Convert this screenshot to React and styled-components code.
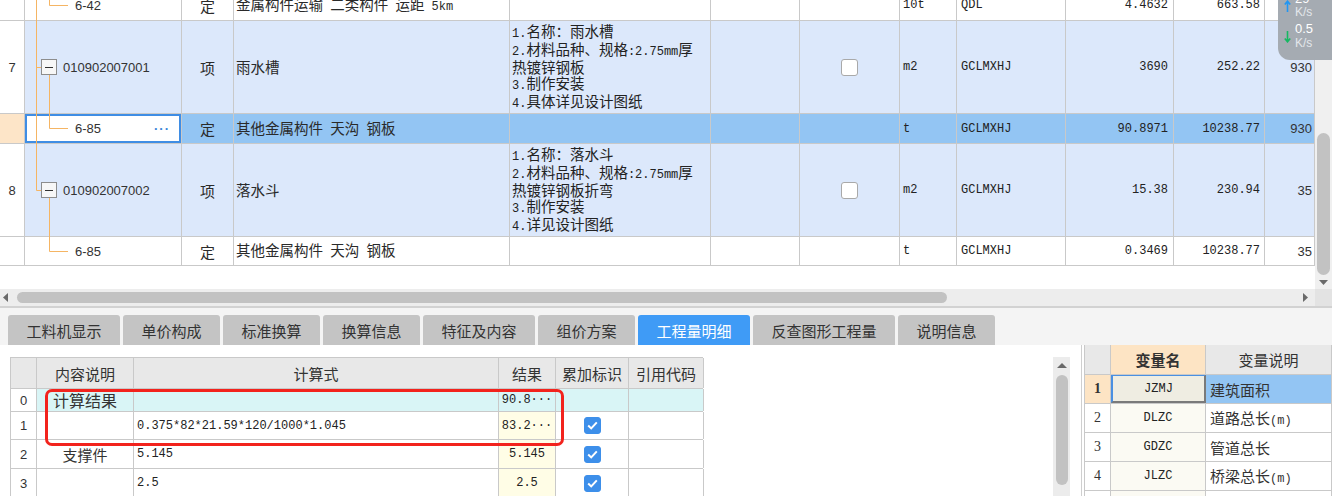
import React from 'react';
import styled, { createGlobalStyle } from 'styled-components';

const GlobalStyle = createGlobalStyle`
  html, body { margin: 0; padding: 0; background: #fff; overflow: hidden; }
  body { font-family: "Noto Sans CJK SC", "Liberation Sans", sans-serif; color: #2a2a2a; }
  * { box-sizing: border-box; }
`;

const HAN = /([\u2E80-\u9FFF\u3000-\u303F\uFF00-\uFFEF]+)/;
const LINE = '#c9c9c9';
const TOP_COLS = '25px 157px 52px 276px 201px 89px 100px 57px 109px 108px 91px 50px';

const Han = styled.span`
  font-family: "Noto Sans CJK SC", sans-serif;
  font-size: ${p => p.size || 14.5}px;
`;
const Latin = styled.span`
  font-family: "Liberation Mono", monospace;
  font-size: 12px;
  white-space: pre;
`;
const MixLine = styled.span`
  display: inline-flex;
  align-items: baseline;
  line-height: 1;
  white-space: pre;
`;

// SimSun-like mix: half width latin, full width han
const Mixed = ({ text, size }) => (
  <MixLine>
    {text.split(HAN).filter(Boolean).map((p, i) =>
      HAN.test(p) ? <Han key={i} size={size}>{p}</Han> : <Latin key={i}>{p}</Latin>
    )}
  </MixLine>
);

const Page = styled.div`
  position: relative;
  width: 1332px;
  height: 496px;
  overflow: hidden;
  display: flex;
  flex-direction: column;
`;

/* ---------- top grid ---------- */
const TopArea = styled.div`
  position: relative;
  height: 289px;
  display: flex;
`;
const GridWrap = styled.div`
  width: 1315px;
  overflow: hidden;
`;
const Grid = styled.div`
  margin-top: -10px;
`;
const rowBg = { item: '#dce8fb', sel: '#93c5f3', plain: '#fff' };
const Row = styled.div`
  display: grid;
  grid-template-columns: ${TOP_COLS};
  height: ${p => p.h}px;
  border-bottom: 1px solid ${LINE};
  background: ${p => rowBg[p.tone]};
`;
const Cell = styled.div`
  position: relative;
  display: flex;
  align-items: center;
  justify-content: ${p => (p.align === 'right' ? 'flex-end' : p.align === 'center' ? 'center' : 'flex-start')};
  padding: 0 ${p => p.pr ?? 3}px 0 ${p => p.pl ?? 3}px;
  border-right: 1px solid ${LINE};
  overflow: hidden;
  white-space: nowrap;
  background: ${p => p.bg || 'transparent'};
  box-shadow: ${p => (p.focus ? 'inset 0 0 0 2px #3f8de4' : 'none')};
`;
const CodeText = styled.span`
  font-family: "Liberation Sans", sans-serif;
  font-size: 13px;
  color: #333;
`;
const NumText = styled.span`
  font-family: "Liberation Mono", monospace;
  font-size: 12px;
  color: #222;
`;
const SansNum = styled.span`
  font-family: "Liberation Sans", sans-serif;
  font-size: 13px;
  color: #333;
`;
const ExpandBox = styled.span`
  width: 16px;
  height: 16px;
  margin-right: 6px;
  border: 1px solid #8d8d8d;
  background: #f7f7f7;
  display: flex;
  align-items: center;
  justify-content: center;
  &::after {
    content: '';
    width: 8px;
    height: 1px;
    background: #333;
  }
`;
const Dots = styled.span`
  margin-left: auto;
  margin-right: 8px;
  color: #3b86d8;
  font-family: "Liberation Sans", sans-serif;
  font-weight: bold;
  font-size: 13px;
  letter-spacing: 1px;
`;
const Feat = styled.div`
  display: flex;
  flex-direction: column;
  color: #222;
`;
const FeatLine = styled.div`
  height: 17.4px;
  display: flex;
  align-items: center;
`;
const Box = styled.span`
  width: 17px;
  height: 17px;
  border-radius: 3px;
  border: 1px solid ${p => (p.on ? '#3d8fea' : '#a9a9a9')};
  background: ${p => (p.on ? '#3d8fea' : '#fff')};
  display: flex;
  align-items: center;
  justify-content: center;
`;
const TreeLines = styled.svg`
  position: absolute;
  left: 0;
  top: 0;
  pointer-events: none;
`;

const VScroll = styled.div`
  width: 17px;
  background: #f0f0f0;
  display: flex;
  flex-direction: column;
  align-items: center;
`;
const Thumb = styled.div`
  width: ${p => p.w || 13}px;
  height: ${p => p.h}px;
  margin-top: ${p => p.mt}px;
  border-radius: 7px;
  background: #c2c2c2;
`;
const Arrow = styled.svg`
  flex: none;
  margin-top: ${p => p.mt || 0}px;
`;

/* ---------- net speed overlay ---------- */
const Speed = styled.div`
  position: absolute;
  left: 1278px;
  top: 0;
  width: 70px;
  height: 60px;
  background: #a5abb2;
  border-bottom-left-radius: 12px;
  padding-left: 6px;
  display: flex;
  flex-direction: column;
`;
const SpeedGroup = styled.div`
  display: flex;
  align-items: center;
  gap: 4px;
  margin-top: ${p => p.mt}px;
`;
const SpeedLines = styled.div`
  display: flex;
  flex-direction: column;
  font-family: "Liberation Sans", sans-serif;
`;
const SpeedVal = styled.span`
  color: #fff;
  font-size: 13px;
  line-height: 14px;
`;
const SpeedUnit = styled.span`
  color: #e3e7eb;
  font-size: 12px;
  line-height: ${p => p.lh || 13}px;
`;

/* ---------- scrollbar + tabs ---------- */
const HScroll = styled.div`
  height: 19px;
  background: #ededed;
  border-bottom: 2px solid #d2d2d2;
  display: flex;
  align-items: center;
`;
const HThumb = styled.div`
  width: 930px;
  height: 11px;
  margin-left: 9px;
  border-radius: 6px;
  background: #c2c2c2;
`;
const Corner = styled.div`
  margin-left: auto;
  width: 17px;
  height: 100%;
  background: #e3e3e3;
`;
const TabBar = styled.div`
  height: 37px;
  background: #f4f4f4;
  padding: 7px 0 0 8px;
  display: flex;
  gap: 3px;
`;
const Tab = styled.div`
  width: ${p => p.w}px;
  height: 30px;
  display: flex;
  align-items: center;
  justify-content: center;
  border-radius: 3px 3px 0 0;
  background: ${p => (p.active ? '#3f9bf6' : '#c4c4c4')};
  color: ${p => (p.active ? '#fff' : '#333')};
  font-size: 15px;
`;

/* ---------- bottom panes ---------- */
const Bottom = styled.div`
  flex: 1;
  display: flex;
  min-height: 0;
`;
const LeftPane = styled.div`
  position: relative;
  width: 1082px;
  border-right: 1px solid #cfcfcf;
  padding: 12px 11px 0 10px;
  display: flex;
  align-items: flex-start;
`;
const CalcTable = styled.div`
  width: 693px;
  border-left: 1px solid ${LINE};
  border-top: 1px solid ${LINE};
`;
const CalcRow = styled.div`
  display: grid;
  grid-template-columns: 26px 97px 365px 57px 73px 75px;
  height: ${p => p.h}px;
  border-bottom: 1px solid ${LINE};
`;
const CalcCell = styled.div`
  display: flex;
  align-items: center;
  justify-content: ${p => (p.left ? 'flex-start' : 'center')};
  padding-left: ${p => (p.left ? 3 : 0)}px;
  border-right: 1px solid ${LINE};
  background: ${p => p.bg || '#fff'};
  font-size: ${p => p.fs || 15}px;
  color: #333;
  white-space: nowrap;
  overflow: hidden;
`;
const RedMark = styled.div`
  position: absolute;
  left: 45px;
  top: 44px;
  width: 519px;
  height: 57px;
  border: 3px solid #f2231d;
  border-radius: 7px;
  pointer-events: none;
`;
const SideScroll = styled(VScroll)`
  margin-left: auto;
  height: 139px;
  background: #ececec;
`;
const RightPane = styled.div`
  flex: 1;
  padding-left: 2px;
`;
const VarTable = styled.div`
  border-left: 1px solid ${LINE};
`;
const VarRow = styled.div`
  display: grid;
  grid-template-columns: 26px 95px 1fr;
  height: ${p => p.h}px;
  border-bottom: 1px solid ${LINE};
`;
const VarCell = styled.div`
  display: flex;
  align-items: center;
  justify-content: ${p => (p.left ? 'flex-start' : 'center')};
  padding-left: ${p => (p.left ? 4 : 0)}px;
  border-right: 1px solid ${LINE};
  background: ${p => p.bg || '#fff'};
  font-size: 15px;
  font-weight: ${p => (p.bold ? 700 : 400)};
  color: #333;
  white-space: nowrap;
  overflow: hidden;
`;
const VarName = styled(VarCell)`
  border-top: 1px solid #4a90e2;
  border-left: 2px solid #4a90e2;
  border-right: 2px solid #7a7a7a;
  border-bottom: 2px solid #7a7a7a;
`;
const SerifNum = styled.span`
  font-family: "Liberation Serif", serif;
  font-size: 14px;
  font-weight: ${p => (p.bold ? 700 : 400)};
`;

const feat7 = ['1.名称：雨水槽', '2.材料品种、规格:2.75mm厚', '热镀锌钢板', '3.制作安装', '4.具体详见设计图纸'];
const feat8 = ['1.名称：落水斗', '2.材料品种、规格:2.75mm厚', '热镀锌钢板折弯', '3.制作安装', '4.详见设计图纸'];

const rows = [
  { h: 31, tone: 'plain', code: '6-42', child: true, kind: '定', name: '金属构件运输 二类构件 运距 5km', unit: '10t', ref: 'QDL', qty: '4.4632', price: '663.58', total: '' },
  { h: 93, tone: 'item', num: '7', code: '010902007001', kind: '项', name: '雨水槽', feat: feat7, unit: 'm2', ref: 'GCLMXHJ', qty: '3690', price: '252.22', total: '930' },
  { h: 30, tone: 'sel', code: '6-85', child: true, focus: true, kind: '定', name: '其他金属构件 天沟 钢板', unit: 't', ref: 'GCLMXHJ', qty: '90.8971', price: '10238.77', total: '930' },
  { h: 93, tone: 'item', num: '8', code: '010902007002', kind: '项', name: '落水斗', feat: feat8, unit: 'm2', ref: 'GCLMXHJ', qty: '15.38', price: '230.94', total: '35' },
  { h: 29, tone: 'plain', code: '6-85', child: true, kind: '定', name: '其他金属构件 天沟 钢板', unit: 't', ref: 'GCLMXHJ', qty: '0.3469', price: '10238.77', total: '35' },
];

const tabs = [
  ['工料机显示', 112], ['单价构成', 97], ['标准换算', 97], ['换算信息', 97], ['特征及内容', 112],
  ['组价方案', 97], ['工程量明细', 112, true], ['反查图形工程量', 142], ['说明信息', 97],
];

const calcRows = [
  { h: 23, n: '0', desc: '计算结果', formula: '', result: '90.8···', check: false, cyan: true },
  { h: 28, n: '1', desc: '', formula: '0.375*82*21.59*120/1000*1.045', result: '83.2···', check: true },
  { h: 29, n: '2', desc: '支撑件', formula: '5.145', result: '5.145', check: true },
  { h: 29, n: '3', desc: '', formula: '2.5', result: '2.5', check: true },
];

const vars = [
  ['2', 'DLZC', '道路总长(m)'],
  ['3', 'GDZC', '管道总长'],
  ['4', 'JLZC', '桥梁总长(m)'],
  ['5', '', ''],
];

const Check = ({ on }) => (
  <Box on={on}>
    {on && (
      <svg width="11" height="9" viewBox="0 0 11 9">
        <path d="M1.2 4.6 L4.2 7.4 L9.8 1.4" fill="none" stroke="#fff" strokeWidth="2" />
      </svg>
    )}
  </Box>
);

const TopRow = ({ r }) => (
  <Row h={r.h} tone={r.tone}>
    <Cell align="center" bg={r.tone === 'sel' ? '#fde5c8' : '#fff'}>
      <SansNum>{r.num}</SansNum>
    </Cell>
    <Cell pl={r.child ? 50 : 16} bg={r.focus ? '#fff' : undefined} focus={r.focus}>
      {!r.child && <ExpandBox />}
      <CodeText>{r.code}</CodeText>
      {r.focus && <Dots>···</Dots>}
    </Cell>
    <Cell align="center"><Han size={15}>{r.kind}</Han></Cell>
    <Cell pl={2}><Mixed text={r.name} /></Cell>
    <Cell pl={2}>
      {r.feat && (
        <Feat>
          {r.feat.map(t => <FeatLine key={t}><Mixed text={t} /></FeatLine>)}
        </Feat>
      )}
    </Cell>
    <Cell />
    <Cell align="center">{r.feat && <Check />}</Cell>
    <Cell pl={3}><NumText>{r.unit}</NumText></Cell>
    <Cell pl={4}><NumText>{r.ref}</NumText></Cell>
    <Cell align="right" pr={5}><NumText>{r.qty}</NumText></Cell>
    <Cell align="right" pr={4}><NumText>{r.price}</NumText></Cell>
    <Cell align="right" pr={2}><SansNum>{r.total}</SansNum></Cell>
  </Row>
);

export default function App() {
  return (
    <Page>
      <GlobalStyle />
      <TopArea>
        <GridWrap>
          <Grid>
            {rows.map((r, i) => <TopRow key={i} r={r} />)}
          </Grid>
        </GridWrap>
        <VScroll>
          <Thumb mt={133} h={142} />
          <Arrow mt={5} width="9" height="5" viewBox="0 0 9 5">
            <path d="M0 0 L9 0 L4.5 5 Z" fill="#6a6a6a" />
          </Arrow>
        </VScroll>
        <TreeLines width="182" height="289" viewBox="0 0 182 289">
          <g fill="none" stroke="#f5b564" strokeWidth="1">
            <path d="M36.5 0 V190.5 H41" />
            <path d="M36.5 67.5 H41" />
            <path d="M49.5 0 V5.5 H68" />
            <path d="M49.5 75 V128.5 H68" />
            <path d="M49.5 198 V251.5 H68" />
          </g>
        </TreeLines>
        <Speed>
          <SpeedGroup mt={-8}>
            <svg width="7" height="12" viewBox="0 0 7 12">
              <path d="M3.5 12 V2 M0.8 4.6 L3.5 1.2 L6.2 4.6" fill="none" stroke="#2196f3" strokeWidth="1.6" />
            </svg>
            <SpeedLines>
              <SpeedVal>29</SpeedVal>
              <SpeedUnit>K/s</SpeedUnit>
            </SpeedLines>
          </SpeedGroup>
          <SpeedGroup mt={3}>
            <svg width="7" height="12" viewBox="0 0 7 12">
              <path d="M3.5 0 V10 M0.8 7.4 L3.5 10.8 L6.2 7.4" fill="none" stroke="#16b862" strokeWidth="1.6" />
            </svg>
            <SpeedLines>
              <SpeedVal>0.5</SpeedVal>
              <SpeedUnit lh={15}>K/s</SpeedUnit>
            </SpeedLines>
          </SpeedGroup>
        </Speed>
      </TopArea>

      <HScroll>
        <Arrow width="5" height="9" viewBox="0 0 5 9" style={{ marginLeft: 3 }}>
          <path d="M5 0 L5 9 L0 4.5 Z" fill="#6a6a6a" />
        </Arrow>
        <HThumb />
        <Arrow width="5" height="9" viewBox="0 0 5 9" style={{ marginLeft: 356 }}>
          <path d="M0 0 L0 9 L5 4.5 Z" fill="#6a6a6a" />
        </Arrow>
        <Corner />
      </HScroll>

      <TabBar>
        {tabs.map(([t, w, a]) => <Tab key={t} w={w} active={a}>{t}</Tab>)}
      </TabBar>

      <Bottom>
        <LeftPane>
          <CalcTable>
            <CalcRow h={31}>
              {['', '内容说明', '计算式', '结果', '累加标识', '引用代码'].map((t, i) => (
                <CalcCell key={i} bg="#e8e8e8">{t}</CalcCell>
              ))}
            </CalcRow>
            {calcRows.map(r => (
              <CalcRow key={r.n} h={r.h}>
                <CalcCell fs={13}><SansNum>{r.n}</SansNum></CalcCell>
                <CalcCell bg={r.cyan ? '#d9f5f6' : undefined} fs={r.cyan ? 16 : 15}>{r.desc}</CalcCell>
                <CalcCell left bg={r.cyan ? '#d9f5f6' : undefined}><NumText>{r.formula}</NumText></CalcCell>
                <CalcCell bg={r.cyan ? '#d9f5f6' : '#fffde6'}><NumText>{r.result}</NumText></CalcCell>
                <CalcCell bg={r.cyan ? '#d9f5f6' : undefined}>{r.check && <Check on />}</CalcCell>
                <CalcCell bg={r.cyan ? '#d9f5f6' : undefined} />
              </CalcRow>
            ))}
          </CalcTable>
          <SideScroll>
            <Arrow mt={6} width="10" height="5" viewBox="0 0 10 5">
              <path d="M0 5 L10 5 L5 0 Z" fill="#6a6a6a" />
            </Arrow>
            <Thumb mt={7} h={110} w={12} />
          </SideScroll>
          <RedMark />
        </LeftPane>

        <RightPane>
          <VarTable>
            <VarRow h={30}>
              <VarCell bg="#e8e8e8" />
              <VarCell bg="#fde4c4" bold>变量名</VarCell>
              <VarCell bg="#e8e8e8">变量说明</VarCell>
            </VarRow>
            <VarRow h={29}>
              <VarCell bg="#fde4c4"><SerifNum bold>1</SerifNum></VarCell>
              <VarName bg="#efede2"><NumText>JZMJ</NumText></VarName>
              <VarCell left bg="#93c5f3">建筑面积</VarCell>
            </VarRow>
            {vars.map(([n, code, desc]) => (
              <VarRow key={n} h={29}>
                <VarCell><SerifNum>{n}</SerifNum></VarCell>
                <VarCell bg="#fbfaf3"><NumText>{code}</NumText></VarCell>
                <VarCell left><Mixed text={desc} size={15} /></VarCell>
              </VarRow>
            ))}
          </VarTable>
        </RightPane>
      </Bottom>
    </Page>
  );
}
